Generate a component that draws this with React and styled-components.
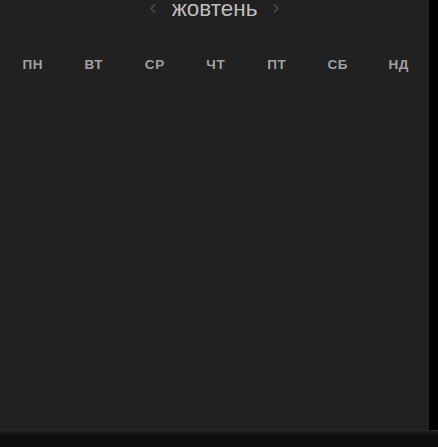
import React from "react";
import styled, { createGlobalStyle } from "styled-components";

const Global = createGlobalStyle`
  html, body { margin: 0; padding: 0; background: #000; }
  body { font-family: "Liberation Sans", Arial, sans-serif; overflow: hidden; }
`;

const Page = styled.div`
  width: 438px;
  height: 447px;
  display: flex;
  flex-direction: column;
  background: #000;
`;

const Panel = styled.div`
  width: 429px;
  height: 430px;
  background: #212121;
  display: flex;
  flex-direction: column;
  box-sizing: border-box;
`;

const Header = styled.div`
  display: flex;
  justify-content: center;
  align-items: flex-start;
  gap: 16px;
  height: 18px;
`;

const Title = styled.div`
  font-size: 22.5px;
  line-height: 18px;
  color: #bdbdbd;
`;

const Arrow = styled.button`
  border: 0;
  background: none;
  padding: 0;
  margin-top: 4px;
  width: 6px;
  height: 9px;
  display: flex;
  cursor: pointer;
`;

const Weekdays = styled.div`
  display: grid;
  grid-template-columns: repeat(7, 1fr);
  width: 427px;
  padding-left: 2px;
  margin-top: 40px;
`;

const Day = styled.div`
  text-align: center;
  font-size: 13.5px;
  font-weight: bold;
  line-height: 13px;
  color: #a0a0a0;
  letter-spacing: 0.6px;
  text-indent: 0.6px;
`;

const Footer = styled.div`
  flex: 1;
  background: linear-gradient(#2c2c2c 0px, #1a1a1a 2px, #0e0e0e 6px, #0b0b0b 100%);
`;

const Chevron = ({ dir }) => (
  <svg width="6" height="9" viewBox="0 0 6 9">
    <path
      d={dir === "left" ? "M5 0.5 L1 4.5 L5 8.5" : "M1 0.5 L5 4.5 L1 8.5"}
      fill="none"
      stroke="#4d4d4d"
      strokeWidth="1.4"
    />
  </svg>
);

const days = ["ПН", "ВТ", "СР", "ЧТ", "ПТ", "СБ", "НД"];

export default function App() {
  return (
    <>
      <Global />
      <Page>
        <Panel>
          <Header>
            <Arrow aria-label="prev"><Chevron dir="left" /></Arrow>
            <Title>жовтень</Title>
            <Arrow aria-label="next"><Chevron dir="right" /></Arrow>
          </Header>
          <Weekdays>
            {days.map((d) => (
              <Day key={d}>{d}</Day>
            ))}
          </Weekdays>
        </Panel>
        <Footer />
      </Page>
    </>
  );
}
